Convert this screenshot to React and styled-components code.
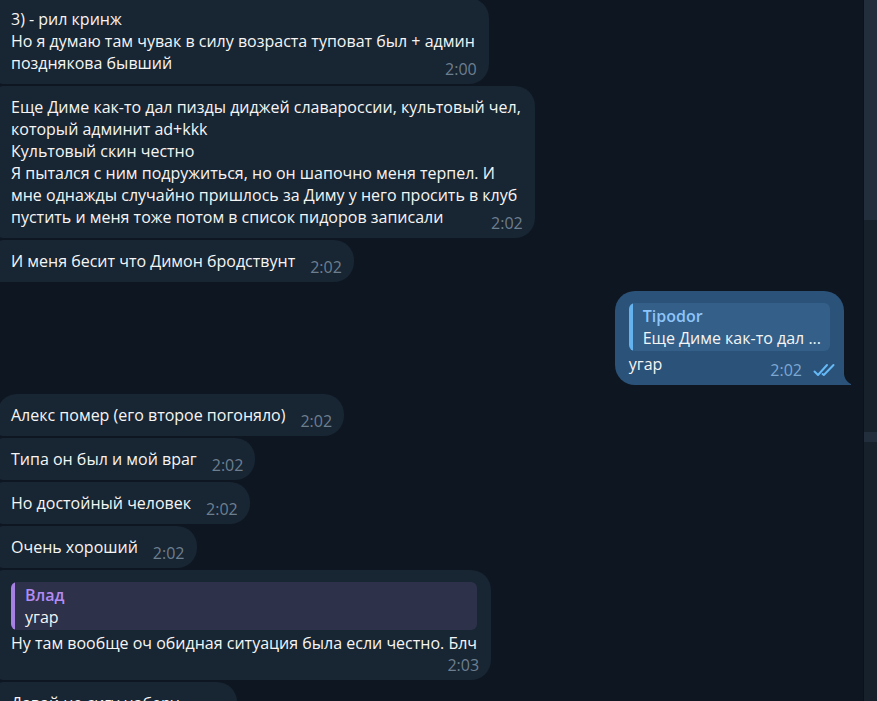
import styled, {createGlobalStyle} from "styled-components";

const GlobalStyle = createGlobalStyle`
  * {
    box-sizing: border-box;
  }

  body {
    margin: 0;
    background-color: #0e1621;
    color: #f5f5f5;
    font-family: "Open Sans", "Noto Sans", sans-serif;
    font-size: 16px;
    line-height: 22px;
  }
`;

const Window = styled.main`
  display: flex;
  height: 100vh;
  overflow: hidden;
`;

const History = styled.section`
  flex: 1;
  min-width: 0;
  display: flex;
  flex-direction: column;
  gap: 9px;
  margin: -2px 0 0 -3px;
`;

const Group = styled.div`
  display: flex;
  flex-direction: column;
  align-items: ${(props) => props.$out ? "flex-end" : "flex-start"};
  gap: 2px;
  padding-right: ${(props) => props.$out ? "19px" : "0"};
`;

const Bubble = styled.article`
  position: relative;
  flex-shrink: 0;
  max-width: 100%;
  padding: ${(props) => props.$reply ? "12px" : "10px"} 14px 10px;
  border-radius: 20px;
  border-top-left-radius: ${(props) => props.$first ? "20px" : "6px"};
  border-bottom-left-radius: ${(props) => props.$last ? "0" : "6px"};
  background-color: #182533;
`;

const OutBubble = styled(Bubble)`
  border-radius: 20px 20px 0 20px;
  background-color: #2b5278;
`;

const Text = styled.div`
  white-space: pre-line;
`;

const Time = styled.time`
  float: right;
  margin: 6px -2px -6px 15px;
  color: #6d7f8f;
`;

const TimeBelow = styled(Time)`
  float: none;
  display: block;
  margin: 0 -2px -6px 0;
  text-align: right;
`;

const OutTime = styled(Time)`
  display: flex;
  align-items: center;
  gap: 11px;
  margin-right: -5px;
  color: #7da8d3;
`;

const Reply = styled.blockquote`
  margin: 0 0 2px;
  padding: 2px 9px 2px 14px;
  border-radius: 6px;
  background: linear-gradient(to right, ${(props) => props.$accent} 4px, ${(props) => props.$fill} 4px);
`;

const ReplyName = styled.div`
  color: ${(props) => props.$color};
  font-weight: 600;
`;

const Tail = styled.svg`
  position: absolute;
  left: 100%;
  bottom: 0;
`;

const Scrollbar = styled.aside`
  width: 14px;
  display: flex;
  flex-direction: column;
  border-left: 1px solid #0b121b;
  background-color: #17212b;
`;

const Thumb = styled.div`
  height: ${(props) => props.$height};
  margin-bottom: 212px;
  background-color: #232e3c;
`;

const Ticks = () => (
  <svg width="22" height="14" viewBox="0 0 22 14" fill="none" stroke="#65b9f7" strokeWidth="2" strokeLinecap="round" strokeLinejoin="round">
    <path d="M1.5 8.5L5 12L14 2"/>
    <path d="M9.5 11L10.8 12L20.5 2"/>
  </svg>
)

const Message = ({text, time, ...rest}) => (
  <Bubble {...rest}>
    <Text>{text}<Time>{time}</Time></Text>
  </Bubble>
)

const longText = `Еще Диме как-то дал пизды диджей славароссии, культовый чел,
который админит ad+kkk
Культовый скин честно
Я пытался с ним подружиться, но он шапочно меня терпел. И
мне однажды случайно пришлось за Диму у него просить в клуб
пустить и меня тоже потом в список пидоров записали`;

const App = () => {
  return <>
    <GlobalStyle/>
    <Window>
      <History>
        <Group>
          <Message text={"3) - рил кринж\nНо я думаю там чувак в силу возраста туповат был + админ\nпозднякова бывший"} time="2:00"/>
          <Message text={longText} time="2:02"/>
          <Message text="И меня бесит что Димон бродствунт" time="2:02" $last/>
        </Group>

        <Group $out>
          <OutBubble $reply>
            <Reply $accent="#65b3ee" $fill="#335f88">
              <ReplyName $color="#8dc5fa">Tipodor</ReplyName>
              <div>Еще Диме как-то дал ...</div>
            </Reply>
            <Text>угар<OutTime>2:02<Ticks/></OutTime></Text>
            <Tail width="7" height="12" viewBox="0 0 7 12" fill="#2b5278">
              <path d="M0 0C0 5 3 9 7 11V12H0Z"/>
            </Tail>
          </OutBubble>
        </Group>

        <Group>
          <Message text="Алекс помер (его второе погоняло)" time="2:02" $first/>
          <Message text="Типа он был и мой враг" time="2:02"/>
          <Message text="Но достойный человек" time="2:02"/>
          <Message text="Очень хороший" time="2:02"/>
          <Bubble $reply>
            <Reply $accent="#a680e2" $fill="#2d3149">
              <ReplyName $color="#b38bf3">Влад</ReplyName>
              <div>угар</div>
            </Reply>
            <Text>Ну там вообще оч обидная ситуация была если честно. Блч</Text>
            <TimeBelow>2:03</TimeBelow>
          </Bubble>
          <Message text="Давай не сигу наберу" time="2:03"/>
        </Group>
      </History>

      <Scrollbar>
        <Thumb $height="220px"/>
        <Thumb $height="10px"/>
      </Scrollbar>
    </Window>
  </>
}

export default App;
